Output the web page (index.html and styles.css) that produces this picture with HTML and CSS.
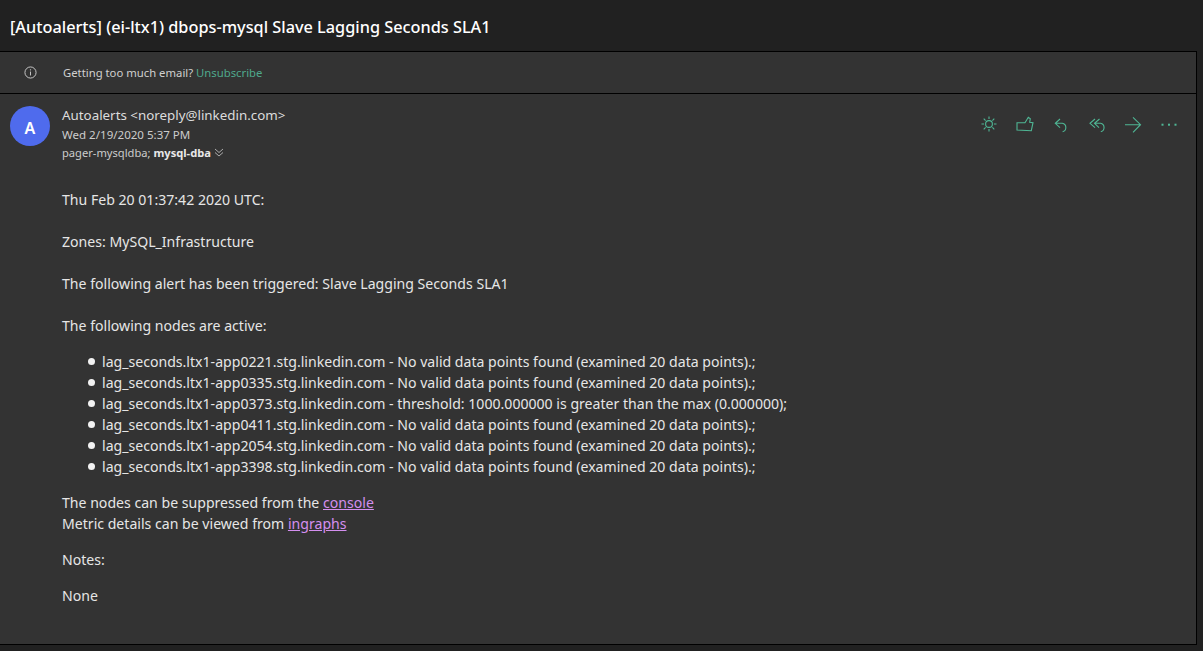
FILE: index.html
```html
<!DOCTYPE html>
<html lang="en">
<head>
  <meta charset="UTF-8" />
  <title>[Autoalerts] (ei-ltx1) dbops-mysql Slave Lagging Seconds SLA1</title>
  <link rel="stylesheet" href="styles.css">
</head>
<body>

  <!-- subject -->
  <div class="subject">[Autoalerts] (ei-ltx1) dbops-mysql Slave Lagging Seconds SLA1</div>

  <div class="card">
    <!-- unsubscribe banner -->
    <div class="banner">
      <svg class="info-icon" viewBox="0 0 14 14">
        <circle cx="7" cy="7" r="6" fill="none" stroke="#d0d0d0" stroke-width="1"/>
        <path d="M7 6v4.2" stroke="#d0d0d0" stroke-width="1"/>
        <circle cx="7" cy="4.1" r=".7" fill="#d0d0d0"/>
      </svg>
      <span>Getting too much email? <a class="unsub" href="#">Unsubscribe</a></span>
    </div>

    <div class="message">
      <div class="msg-head">
        <div class="avatar">A</div>
        <div class="meta">
          <div class="from">Autoalerts &lt;noreply@linkedin.com&gt;</div>
          <div class="date">Wed 2/19/2020 5:37 PM</div>
          <div class="to">pager-mysqldba; <b>mysql-dba</b>
            <svg class="chev" viewBox="0 0 10 9">
              <path d="M1 1l4 3.5L9 1M1 4.5L5 8l4-3.5" fill="none" stroke="#b8b8b8" stroke-width=".9"/>
            </svg>
          </div>
        </div>
        <div class="actions">
          <svg viewBox="0 0 18 18"><g fill="none" stroke="#4fb795" stroke-width="1.1"><circle cx="9" cy="9" r="3.4"/><path d="M9 1.5v2.6M9 13.9v2.6M1.5 9h2.6M13.9 9h2.6M3.7 3.7l1.9 1.9M12.4 12.4l1.9 1.9M3.7 14.3l1.9-1.9M12.4 5.6l1.9-1.9"/></g></svg>
          <svg viewBox="0 0 18 18"><path d="M1 7.700h8L12.300 2.300l2 1.400L13.700 7.200l3.300.5-1.700 8L1 15z" fill="none" stroke="#4fb795" stroke-width="1.1"/></svg>
          <svg viewBox="0 0 18 18"><path d="M8 4L3.300 8.300 8 12.700M3.300 8.300h7a4.300 4.300 0 0 1 .3 8.400" fill="none" stroke="#4fb795" stroke-width="1.1"/></svg>
          <svg viewBox="0 0 18 18"><path d="M7 4L2 8.300 7 12.700M11.500 4L6.500 8.300l4.500 4.400M6.500 8.300h6a4.300 4.300 0 0 1 .3 8.400" fill="none" stroke="#4fb795" stroke-width="1.1"/></svg>
          <svg viewBox="0 0 18 18"><path d="M1 9.700h15.500M9 2.300l7.500 7.400L9 17.300" fill="none" stroke="#4fb795" stroke-width="1.1"/></svg>
          <svg viewBox="0 0 18 18"><g fill="#4fb795"><rect x="1.500" y="8.700" width="2" height="2"/><rect x="8" y="8.700" width="2" height="2"/><rect x="14.500" y="8.700" width="2" height="2"/></g></svg>
        </div>
      </div>

      <div class="msg-body">
        <p class="gap">Thu Feb 20 01:37:42 2020 UTC:</p>
        <p class="gap">Zones: MySQL_Infrastructure</p>
        <p class="gap">The following alert has been triggered: Slave Lagging Seconds SLA1</p>
        <p>The following nodes are active:</p>
        <ul>
          <li>lag_seconds.ltx1-app0221.stg.linkedin.com - No valid data points found (examined 20 data points).;</li>
          <li>lag_seconds.ltx1-app0335.stg.linkedin.com - No valid data points found (examined 20 data points).;</li>
          <li>lag_seconds.ltx1-app0373.stg.linkedin.com - threshold: 1000.000000 is greater than the max (0.000000);</li>
          <li>lag_seconds.ltx1-app0411.stg.linkedin.com - No valid data points found (examined 20 data points).;</li>
          <li>lag_seconds.ltx1-app2054.stg.linkedin.com - No valid data points found (examined 20 data points).;</li>
          <li>lag_seconds.ltx1-app3398.stg.linkedin.com - No valid data points found (examined 20 data points).;</li>
        </ul>
        <p>The nodes can be suppressed from the <a href="#">console</a><br>Metric details can be viewed from <a href="#">ingraphs</a></p>
        <p>Notes:</p>
        <p>None</p>
      </div>
    </div>
  </div>

</body>
</html>
```

FILE: styles.css
```css
html, body {
  margin: 0;
  padding: 0;
  height: 100%;
  overflow: hidden;
  background: #212121;
  color: #e6e6e6;
  font-family: 'Noto Sans', 'Open Sans', sans-serif;
}

.subject {
  height: 51px;
  line-height: 55px;
  padding-left: 10px;
  font-size: 16.3px;
  font-weight: 500;
  color: #ffffff;
  white-space: nowrap;
}

.card {
  width: 1196px;
  height: 592px;
  background: #333333;
  border-top: 1px solid #000;
  border-right: 1px solid #000;
  border-bottom: 1px solid #000;
}

.banner {
  height: 41px;
  display: flex;
  align-items: center;
  gap: 26px;
  padding-left: 24px;
  font-size: 11.3px;
  color: #d0d0d0;
  border-bottom: 1px solid #000;
}

.info-icon {
  width: 13px;
  height: 13px;
}

.unsub {
  color: #4fa88c;
  text-decoration: none;
}

.msg-head {
  display: flex;
  padding: 12px 0 0 10px;
}

.avatar {
  width: 40px;
  height: 40px;
  border-radius: 50%;
  background: #4f6bed;
  color: #fff;
  font-size: 16px;
  font-weight: 600;
  line-height: 44px;
  text-align: center;
}

.meta {
  margin-left: 12px;
  flex: 1;
}

.from {
  font-size: 13.35px;
  line-height: 19px;
  color: #dcdcdc;
}

.date {
  font-size: 11.55px;
  line-height: 19px;
  color: #cccccc;
}

.to {
  font-size: 11.15px;
  line-height: 18px;
  color: #cccccc;
}

.to b {
  color: #e8e8e8;
}

.chev {
  width: 10px;
  height: 9px;
}

.actions {
  display: flex;
  gap: 18px;
  padding: 9px 18px 0 0;
  height: 18px;
}

.actions svg {
  width: 18px;
  height: 18px;
}

.msg-body {
  padding: 27px 0 0 62px;
  font-size: 14.1px;
  line-height: 21px;
  color: #e6e6e6;
}

.msg-body p {
  margin: 15px 0;
}

.msg-body p.gap {
  margin: 0 0 21px;
}

.msg-body ul {
  margin: 15px 0;
  padding-left: 26px;
  list-style: none;
}

.msg-body li {
  display: flex;
  align-items: center;
  gap: 7px;
}

.msg-body li::before {
  content: "";
  width: 7px;
  height: 7px;
  border-radius: 50%;
  background: #f2f2f2;
}

.msg-body a {
  color: #d48fef;
}
```
